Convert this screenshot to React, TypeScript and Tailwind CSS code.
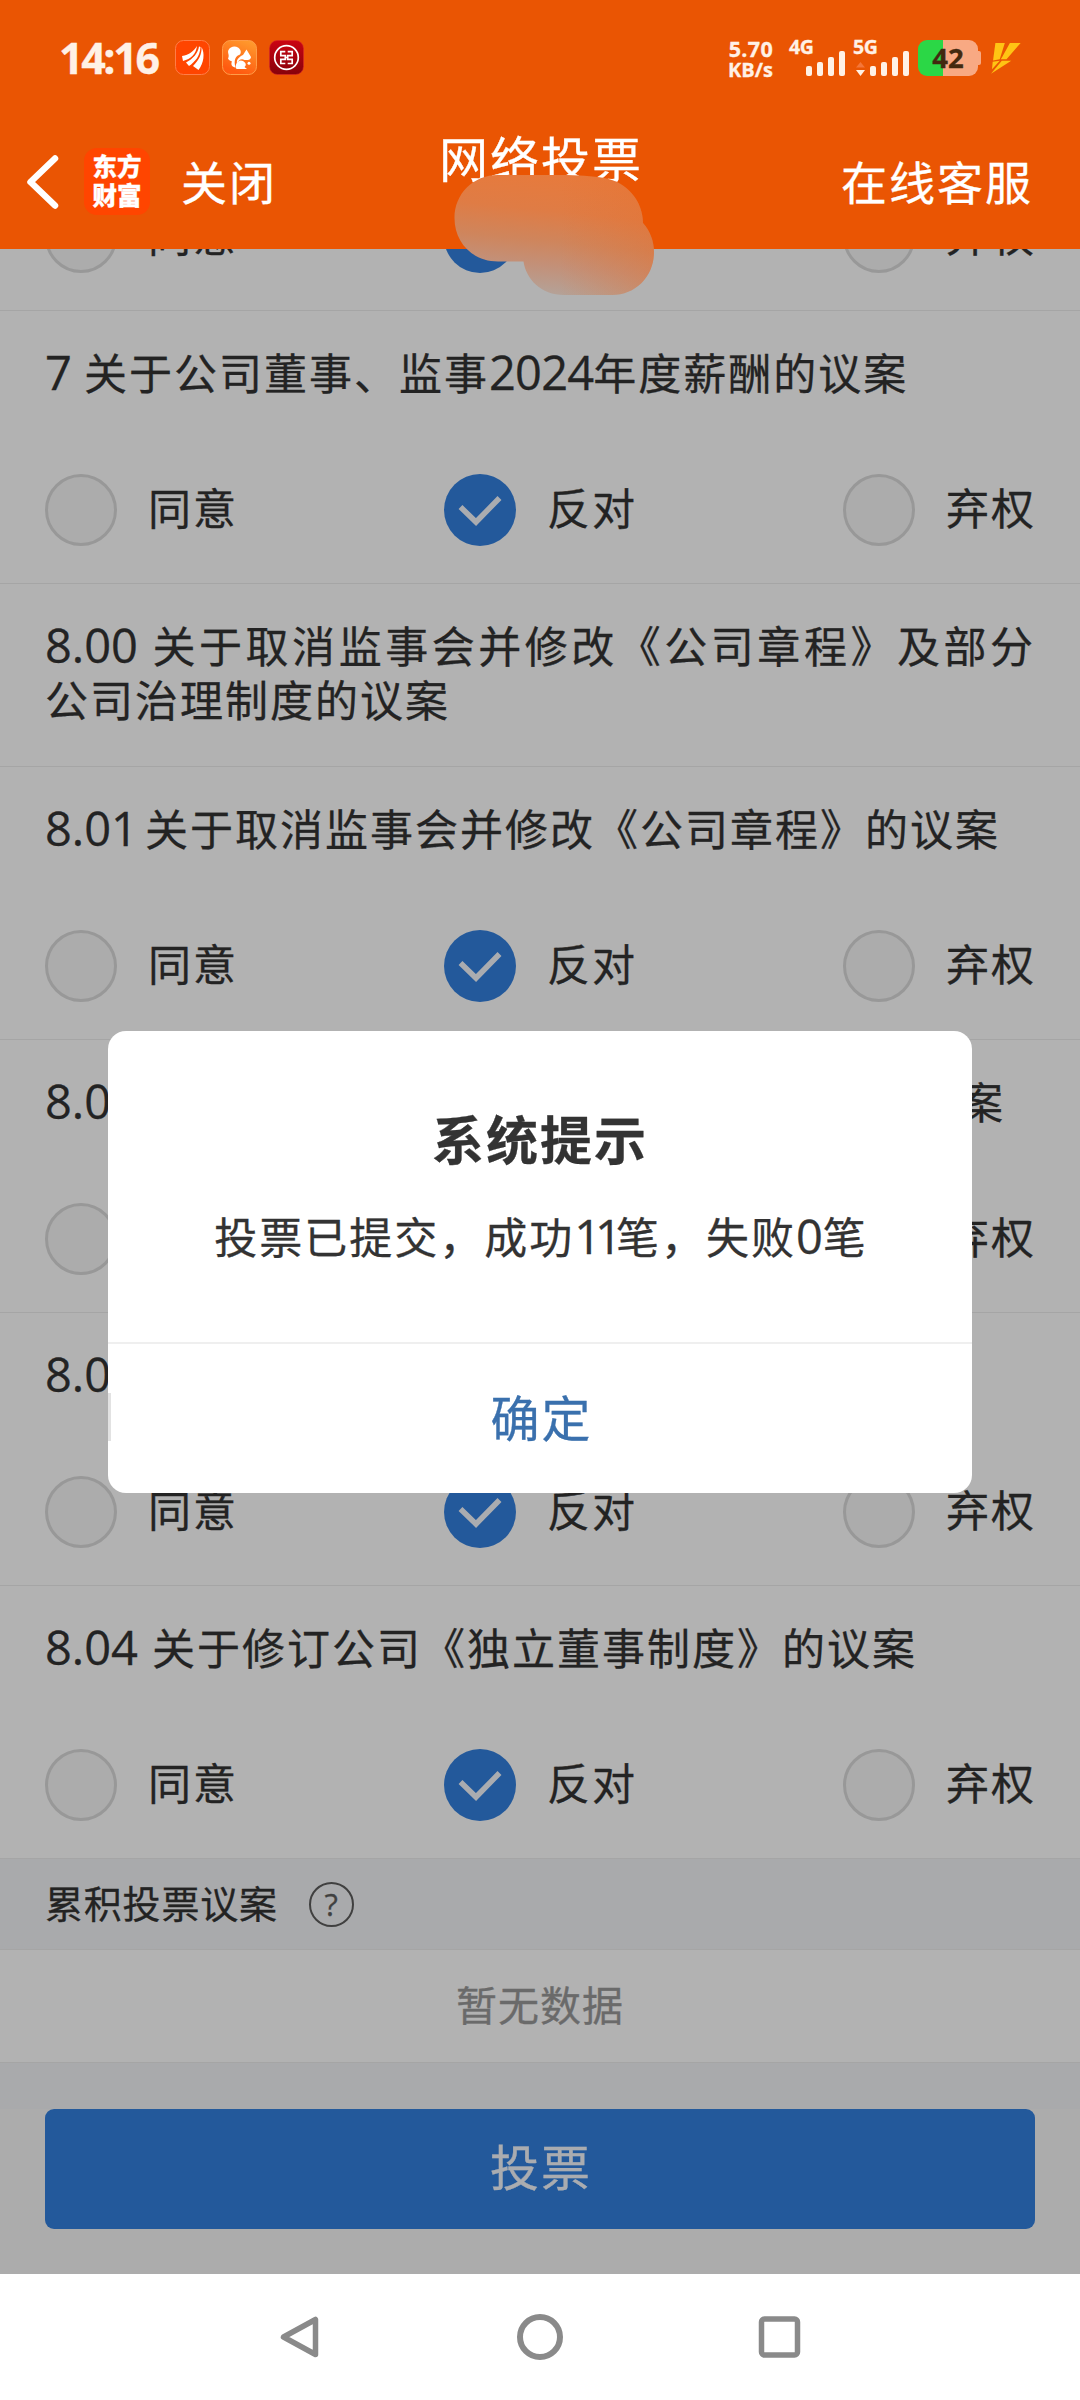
import React from "react";

const CJK = "font-['Noto_Sans_CJK_SC',sans-serif]";
const LATIN = "font-['Open_Sans','Noto_Sans',sans-serif]";

type Motion = { code: string; codeWidth: string; title: React.ReactNode; votable: boolean };

function Num({ children, className = "" }: { children: React.ReactNode; className?: string }) {
  return <span className={`${LATIN} text-[47px] leading-none ${className}`}>{children}</span>;
}

const motions: Motion[] = [
  { code: "6", codeWidth: "w-[39px]", title: "关于续聘会计师事务所的议案", votable: true },
  {
    code: "7",
    codeWidth: "w-[39px]",
    title: (
      <>
        关于公司董事、监事<Num className="tracking-[-0.8px]">2024</Num>年度薪酬的议案
      </>
    ),
    votable: true,
  },
  { code: "8.00", codeWidth: "w-[106px]", title: "关于取消监事会并修改《公司章程》及部分公司治理制度的议案", votable: false },
  { code: "8.01", codeWidth: "w-[100px]", title: "关于取消监事会并修改《公司章程》的议案", votable: true },
  { code: "8.02", codeWidth: "w-[105px]", title: "关于修订公司《股东大会议事规则》的议案", votable: true },
  { code: "8.03", codeWidth: "w-[107px]", title: "关于修订公司《董事会议事规则》的议案", votable: true },
  { code: "8.04", codeWidth: "w-[107px]", title: "关于修订公司《独立董事制度》的议案", votable: true },
];

function Choice({ label, checked }: { label: string; checked?: boolean }) {
  return (
    <div className="flex w-[192px] items-center">
      {checked ? (
        <span className="flex h-[72px] w-[72px] shrink-0 items-center justify-center rounded-full bg-[#3380df]">
          <svg width="72" height="72" viewBox="0 0 72 72" fill="none" stroke="#f4f7fc" strokeWidth="5.5">
            <path d="M16.5 33 L32 48 L55.5 24" />
          </svg>
        </span>
      ) : (
        <span className="h-[72px] w-[72px] shrink-0 rounded-full border-[3px] border-[#dadada] bg-[#f6f6f6]" />
      )}
      <span className="ml-[31px] whitespace-nowrap pb-[9px] text-[43px] leading-[54px] tracking-[2px] text-[#333]">{label}</span>
    </div>
  );
}

function MotionRow({ motion }: { motion: Motion }) {
  return (
    <section className={`${motion.votable ? "h-[273px]" : "h-[183px]"} border-b border-[#ececec] bg-white px-[45px] pt-[33px]`}>
      <h2 className="text-justify text-[43px] leading-[54px] tracking-[2px] text-[#333]">
        <span className={`inline-block text-left ${motion.codeWidth} ${LATIN} text-[47px] leading-none tracking-normal`}>
          {motion.code}
        </span>
        {motion.title}
      </h2>
      {motion.votable && (
        <div className="mt-[76px] flex justify-between">
          <Choice label="同意" />
          <Choice label="反对" checked />
          <Choice label="弃权" />
        </div>
      )}
    </section>
  );
}

function Signal({ label, arrows }: { label: string; arrows?: boolean }) {
  return (
    <div className="flex h-[36px] w-[56px] flex-col">
      <span className={`${LATIN} h-[13px] text-[19.5px] font-bold leading-[14px] tracking-[-0.5px]`}>{label}</span>
      <div className="-mt-[3px] flex h-[26px] items-end justify-end gap-[4.5px]">
        {arrows && (
          <svg width="9" height="14" viewBox="0 0 9 14" className="mr-[0.5px]">
            <path d="M4.5 0 L9 5.5 H0 Z" fill="#f4763a" />
            <path d="M0 8 H9 L4.5 14 Z" fill="#fff1e6" />
          </svg>
        )}
        <i className="h-[10px] w-[6.5px] rounded-[2px] bg-[#fff1e6]" />
        <i className="h-[14px] w-[6.5px] rounded-[2px] bg-[#fff1e6]" />
        <i className="h-[19px] w-[6.5px] rounded-[2px] bg-[#fff1e6]" />
        <i className="h-[25px] w-[6.5px] rounded-[2px] bg-[#fff1e6]" />
      </div>
    </div>
  );
}

function StatusBar() {
  return (
    <div className="flex h-[116px] items-start pl-[59px] pt-[40px] text-[#fff1e6]">
      <span className={`${LATIN} w-[116px] whitespace-nowrap text-[43px] font-bold leading-[35px] tracking-[-2.4px]`}>14:16</span>
      <svg width="35" height="35" viewBox="0 0 35 35">
        <rect x="0.5" y="0.5" width="34" height="34" rx="8" fill="#ff4500" stroke="#ff7d48" />
        <path d="M7 16 C14 15 19 11 22 6 C21 14 16 19 8 21 Z" fill="#fff" />
        <path d="M11 22.5 C18 19 23 13 24 6.5 L25.5 7 C25 16 20 22 14 26 Z" fill="#fff" />
        <path d="M18 26 C24 20 27 14 26.5 7 C30 13 29 23 23.5 30 Z" fill="#fff" />
      </svg>
      <svg width="35" height="35" viewBox="0 0 35 35" className="ml-[12px]">
        <defs>
          <linearGradient id="squirrel" x1="1" y1="0" x2="0.6" y2="1">
            <stop offset="0" stopColor="#ffa030" />
            <stop offset="1" stopColor="#ff5a10" />
          </linearGradient>
        </defs>
        <rect x="0.5" y="0.5" width="34" height="34" rx="8" fill="url(#squirrel)" stroke="#ff9c48" />
        <path d="M6 18.5 C8 15 5 13 6.500 10 C8 6.500 13 5.500 16 7.500 C19 9.500 19.500 12.500 18 14.500 C13.500 16 11.500 20 13.500 27.500 C10 27 8.500 24.500 10 21.500 C8.500 21 7 20.500 6 18.500 Z" fill="#fff" />
        <path d="M24.500 9.500 L29 17 C28.500 20.500 25.500 20 22.500 20 C19 18 16.500 20.500 15 23.500 C14 19 18 16.500 21 15 Z" fill="#fff" />
        <path d="M14 28.500 C12.500 23.500 17 18.800 21 21 C25 23.300 24 26 22.500 27 L25 29 H15 Z" fill="#fff" />
        <circle cx="27" cy="23.300" r="1.500" fill="#fff" />
      </svg>
      <svg width="35" height="35" viewBox="0 0 35 35" className="ml-[11.5px]">
        <defs>
          <linearGradient id="bank" x1="0" y1="0" x2="0" y2="1">
            <stop offset="0" stopColor="#cb0412" />
            <stop offset="1" stopColor="#86020b" />
          </linearGradient>
        </defs>
        <rect x="0.5" y="0.5" width="34" height="34" rx="8" fill="url(#bank)" stroke="#d8262a" strokeOpacity="0.6" />
        <circle cx="17.500" cy="17.500" r="11.800" fill="none" stroke="#fff" strokeWidth="1.700" />
        <path
          d="M16.300 11.700 H11.800 V15.700 H16.300 V19.300 H11.800 V23.500 H16.300 M18.700 11.700 H23.200 V15.700 H18.700 V19.300 H23.200 V23.500 H18.700 M16.300 17.500 H18.700"
          fill="none"
          stroke="#fff"
          strokeWidth="1.700"
        />
      </svg>

      <div className={`${LATIN} ml-auto mt-[1px] flex w-[50px] flex-col items-end whitespace-nowrap font-bold`}>
        <div className="text-[21.5px] leading-[15px] tracking-[0.3px]">5.70</div>
        <div className="mt-[6px] text-[20px] leading-[15px]">KB/s</div>
      </div>
      <div className="ml-[16px]">
        <Signal label="4G" />
      </div>
      <div className="ml-[8px]">
        <Signal label="5G" arrows />
      </div>
      <div className="ml-[9px] flex items-center">
        <div className={`${LATIN} flex h-[36px] w-[60px] items-center justify-center rounded-[9px] bg-[linear-gradient(90deg,#2bd746_0_25px,#f8a983_25px)] text-[27.5px] font-bold leading-none text-[#43290f]`}>
          42
        </div>
        <i className="h-[14px] w-[3px] rounded-r-[2px] bg-[#f8a983]" />
      </div>
      <svg width="31" height="31" viewBox="0 0 90 92" className="ml-[8.5px] mr-[59.5px] mt-[3px]" fill="#ffc414">
        <path d="M15 0 H43 L28 48 L8 52 Z" />
        <path d="M58 0 H90 L48 48 H31 L36 40 Z" />
        <path d="M7 56 L28 53 L5 78 Z" />
        <path d="M34 53 H62 L2 91 Z" />
      </svg>
    </div>
  );
}

function NavBar() {
  return (
    <div className="flex h-[133px] text-white">
      <div className="flex w-1/3 items-start pl-[24px]">
        <svg width="38" height="62" viewBox="0 0 38 62" fill="none" stroke="#fff" strokeWidth="6.5" strokeLinecap="round" strokeLinejoin="round" className="mt-[35px]">
          <path d="M31 7.500 L6.500 31 L31 54.500" />
        </svg>
        <div className="ml-[22px] mt-[32px] flex h-[67px] w-[66px] flex-col items-center justify-center rounded-[13px] bg-[#ff4500] pb-[4px] text-[24.5px] font-black leading-[29px]">
          <span>东方</span>
          <span>财富</span>
        </div>
        <span className="ml-[31px] mt-[34px] text-[46px] leading-[60px] tracking-[2px]">关闭</span>
      </div>
      <h1 className="mt-[11px] w-1/3 pl-[2px] text-center text-[49px] leading-[60px] tracking-[2px]">网络投票</h1>
      <span className="mt-[34px] w-1/3 pr-[47px] text-right text-[46px] leading-[60px] tracking-[2px]">在线客服</span>
    </div>
  );
}

/** Smudge that hides the subtitle under the page title. */
function Smudge() {
  return (
    <svg className="absolute left-[450px] top-[170px]" width="210" height="130" viewBox="450 170 210 130">
      <defs>
        <linearGradient id="smudge" gradientUnits="userSpaceOnUse" x1="560" y1="175" x2="548" y2="296">
          <stop offset="0" stopColor="#e77a3c" />
          <stop offset="0.3" stopColor="#df7c45" />
          <stop offset="0.55" stopColor="#cf855c" />
          <stop offset="0.75" stopColor="#c39078" />
          <stop offset="1" stopColor="#b3a39a" />
        </linearGradient>
        <linearGradient id="warm" gradientUnits="userSpaceOnUse" x1="560" y1="0" x2="650" y2="0">
          <stop offset="0" stopColor="#e5702e" stopOpacity="0" />
          <stop offset="1" stopColor="#e5702e" stopOpacity="0.35" />
        </linearGradient>
      </defs>
      {["url(#smudge)", "url(#warm)"].map((fill) => (
        <path
          key={fill}
          fill={fill}
          d="M498 175 H560 C578 175 592 176 604 178 C628 182 643 202 643 223 C650 231 654 241 654 252 C654 276 636 295 612 295 H564 C541 295 526 279 523.500 261.500 H498 C473 261.500 454.500 243 454.500 218 C454.500 194 473 175 498 175 Z"
        />
      ))}
    </svg>
  );
}

function Dialog() {
  return (
    <div className="absolute left-[108px] top-[782px] flex h-[462px] w-[864px] flex-col rounded-[18px] bg-white text-center text-[#333]">
      <div className="h-[313px] border-b-2 border-[#efefef] pt-[75px]">
        <h3 className="text-[52px] font-bold leading-[64px] tracking-[2px]">系统提示</h3>
        <p className="mt-[38px] pl-[2px] text-[43px] leading-[54px] tracking-[2px]">
          投票已提交，成功<Num className="tracking-[-6px]">11</Num>
          <span>笔，失败</span>
          <Num className="tracking-normal">0</Num>笔
        </p>
      </div>
      <button className="flex flex-1 items-center pb-[3px] text-[#3a70ad]">
        <i className="h-[48px] w-[3px] bg-[#e2e2e2]" />
        <span className="flex-1 pb-[3px] text-[49px] leading-[60px] tracking-[2px]">确定</span>
      </button>
    </div>
  );
}

export default function App() {
  return (
    <div className={`relative flex h-[2400px] w-[1080px] flex-col overflow-hidden bg-white [-webkit-text-stroke:0.3px] ${CJK}`}>
      <header className="h-[249px] bg-[#ea5503]">
        <StatusBar />
        <NavBar />
      </header>

      <main className="relative h-[2025px] overflow-hidden bg-[#f7f7f7]">
        <div className="-mt-[211px]">
          {motions.map((m) => (
            <MotionRow key={m.code} motion={m} />
          ))}
        </div>
        <div className="flex h-[91px] items-center border-b border-[#ececec] bg-[#f3f4f6] pl-[45px]">
          <span className="pb-[5px] text-[38px] leading-[48px] tracking-[0.8px] text-[#333]">累积投票议案</span>
          <span className={`${LATIN} ml-[31px] flex h-[45px] w-[45px] items-center justify-center rounded-full border-[2.5px] border-[#5c5c5c] text-[31px] leading-none text-[#5c5c5c]`}>?</span>
        </div>
        <div className="flex h-[113px] items-center justify-center border-b border-[#ececec] bg-white pb-[6px] text-[41px] leading-[54px] tracking-[1px] text-[#999]">
          暂无数据
        </div>
        <div className="h-[46px] bg-[#f3f4f6]" />
        <button className="mx-[45px] flex h-[120px] w-[990px] items-center justify-center rounded-[9px] bg-[#3380df] pb-[8px] pl-[2px] text-[49px] leading-[60px] tracking-[2px] text-[#f4f7fc]">
          投票
        </button>
        <div className="absolute inset-0 bg-black/30" />
        <Dialog />
      </main>

      <nav className="flex flex-1 items-center justify-center">
        <svg width="240" height="50" viewBox="0 0 240 50" fill="none" stroke="#8a8a8a" strokeWidth="5.5" strokeLinejoin="round">
          <path d="M38.500 7.500 V42.500 L6.500 25 Z" />
        </svg>
        <span className="h-[46px] w-[46px] shrink-0 rounded-full border-[6px] border-[#8a8a8a]" />
        <svg width="240" height="50" viewBox="0 0 240 50" fill="none" stroke="#8a8a8a" strokeWidth="5.5" strokeLinejoin="round">
          <rect x="198.500" y="7" width="36" height="36" rx="3" />
        </svg>
      </nav>

      <Smudge />
    </div>
  );
}
